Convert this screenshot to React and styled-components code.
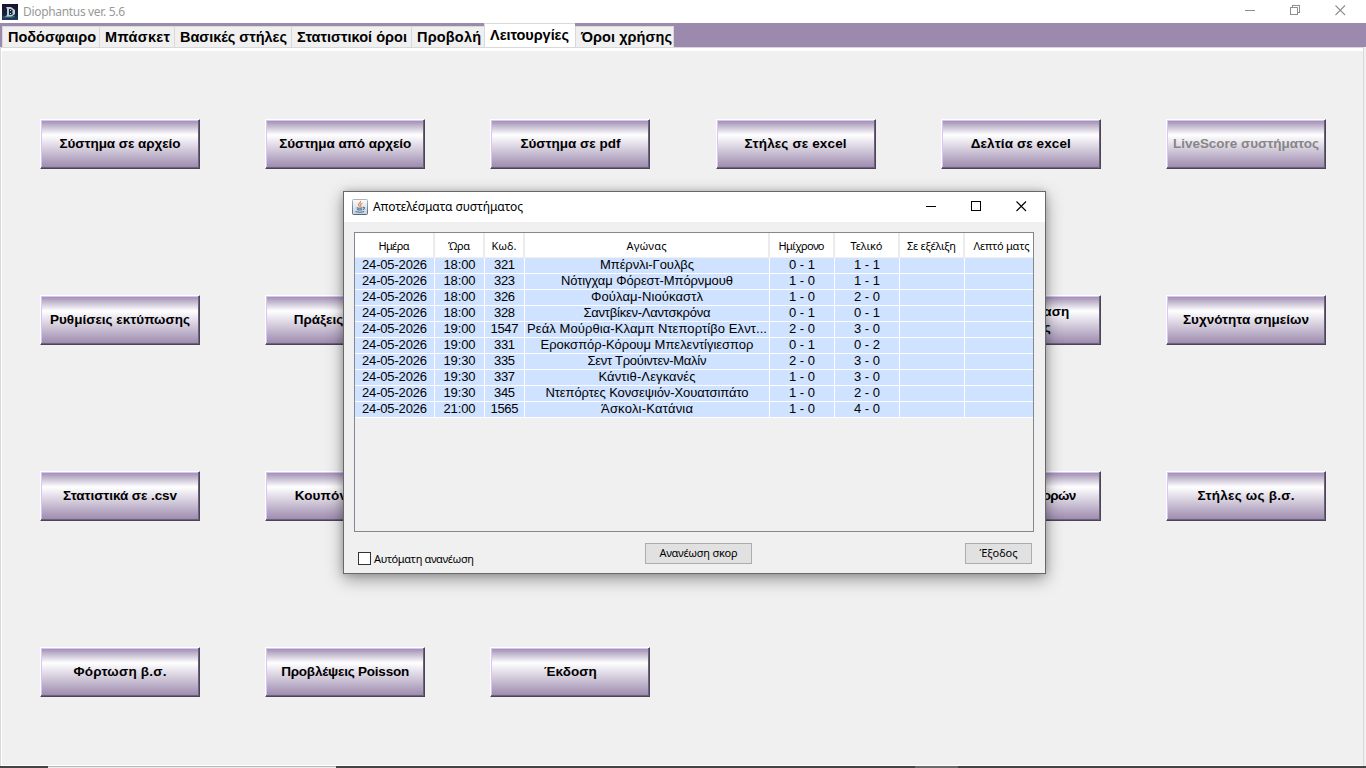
import React, { useLayoutEffect, useRef, useState } from 'react'
import styled, { createGlobalStyle } from 'styled-components'

const GlobalStyle = createGlobalStyle`
* {
  box-sizing: border-box;
}

body {
  margin: 0;
  overflow: hidden;
  background: #f0f0f0;
  font-family: "Liberation Sans", Arial, sans-serif;
}
`

const AppWindow = styled.div`
position: relative;
display: flex;
flex-direction: column;
width: 1366px;
height: 768px;
background: #f0f0f0;
`

const TitleBar = styled.div`
display: flex;
align-items: center;
height: ${p => p.$height}px;
padding-left: ${p => p.$left}px;
background: #fff;
flex-shrink: 0;

> svg {
  flex-shrink: 0;
}
`

const Caption = styled.div`
flex: 1;
padding-left: 5px;
font-family: "Noto Sans", "Open Sans", sans-serif;
font-size: 12px;
line-height: 16px;
color: ${p => p.$color};
`

const WindowButtons = styled.div`
display: flex;
gap: ${p => p.$gap}px;
padding-right: ${p => p.$right}px;
padding-bottom: 2px;
`

const TabBar = styled.div`
display: flex;
align-items: flex-end;
height: 24px;
padding-left: 2px;
background: #9b89ae;
flex-shrink: 0;
`

const Tab = styled.div`
width: ${p => p.$width}px;
height: ${p => p.$active ? 24 : 21}px;
padding: ${p => p.$active ? '3px 0 0 5px' : '2px 0 0 5px'};
border: 1px solid #d9d9d9;
border-right-width: ${p => p.$last ? 1 : 0}px;
border-bottom: 0;
background: ${p => p.$active ? '#fff' : '#f0f0f0'};
font-size: 14.5px;
line-height: 17px;
font-weight: bold;
color: #000;
white-space: nowrap;
`

const Page = styled.div`
flex: 1;
margin-right: 2px;
padding: 68px 37px 0 39px;
border: 1px solid #d9d9d9;
border-bottom: 0;
box-shadow: inset 1px 3px 0 #fff, inset 0 -1px 0 #fff;
`

const ButtonGrid = styled.div`
display: grid;
grid-template-columns: repeat(6, 160px);
grid-auto-rows: 50px;
justify-content: space-between;
row-gap: 126px;
padding-top: 3px;
`

const BevelButton = styled.button`
display: flex;
flex-direction: column;
align-items: center;
justify-content: center;
padding: 0;
border: 1px solid;
border-color: #fff #4d4457 #4d4457 #fff;
box-shadow: inset -1px -1px 0 #6e617c, inset 1px 1px 0 #dbc2f7;
background: linear-gradient(#9b89ae 0%, #fff 31%, #9b89ae 100%);
font-family: inherit;
font-size: 13.5px;
line-height: 16px;
font-weight: bold;
color: ${p => p.disabled ? '#868686' : '#000'};
white-space: nowrap;
`

const BottomEdge = styled.div`
display: flex;
height: 2px;
background: #444;
flex-shrink: 0;
`

const EdgePart = styled.div`
width: ${p => p.$width}px;
margin-left: ${p => p.$left}px;
background: ${p => p.$light ? 'linear-gradient(#b8b8b8 50%, #ececec 50%)' : '#6a6a6a'};
`

const Dialog = styled.div`
position: absolute;
left: 343px;
top: 191px;
width: 703px;
height: 383px;
border: 1px solid #686868;
background: #f0f0f0;
box-shadow: 0 5px 16px rgba(0, 0, 0, 0.38), 0 0 7px rgba(0, 0, 0, 0.16);
`

const TablePane = styled.div`
width: 680px;
height: 300px;
margin: 10px 0 0 10px;
border: 1px solid #828790;
overflow: hidden;
`

const Row = styled.div`
display: grid;
grid-template-columns: 80px 50px 40px 245px 65px 65px 65px 75px;
`

const HeadCell = styled.div`
height: 25px;
border-right: 2px solid #ebebeb;
border-bottom: 1px solid #f0f0f0;
background: #fff;
font-family: "Noto Sans", "Open Sans", sans-serif;
font-size: 11px;
line-height: 26px;
text-align: center;
white-space: nowrap;
`

const Cell = styled.div`
height: 16px;
border-right: 1px solid #fff;
border-bottom: 1px solid #fff;
background: #cfe2ff;
font-size: 13px;
line-height: 13px;
text-align: center;
white-space: nowrap;
overflow: hidden;
`

const DialogFooter = styled.div`
display: flex;
align-items: flex-start;
padding: 11px 13px 0 14px;
font-family: "Noto Sans", "Open Sans", sans-serif;
font-size: 11px;
`

const CheckLabel = styled.div`
display: flex;
align-items: flex-start;
gap: 3px;
width: 287px;
height: 15px;
margin-top: 9px;
line-height: 13px;
`

const CheckBox = styled.div`
width: 13px;
height: 13px;
border: 1px solid #333;
background: #fff;
`

const FlatButton = styled.button`
width: ${p => p.$width}px;
height: 21px;
padding: 0 0 2px;
border: 1px solid #adadad;
background: #e1e1e1;
font: inherit;
line-height: 17px;
color: #000;
`

const Spacer = styled.div`
flex: 1;
`

const FitSpan = styled.span`
display: inline-block;
white-space: pre;
`

// spreads the letters so that the text takes the given width
function Fit({ width, children }) {
  const ref = useRef(null)
  const [spacing, setSpacing] = useState(0)

  useLayoutEffect(() => {
    const natural = ref.current.getBoundingClientRect().width
    setSpacing((width - natural) / (children.length - 1))
  }, [])

  return (
    <FitSpan ref={ref} style={{ letterSpacing: spacing, marginRight: -spacing }}>{children}</FitSpan>
  )
}

const tabs = [
  ['Ποδόσφαιρο', 97, 88],
  ['Μπάσκετ', 75, 65],
  ['Βασικές στήλες', 117, 107],
  ['Στατιστικοί όροι', 120, 110],
  ['Προβολή', 73, 64],
  ['Λειτουργίες', 91, 79],
  ['Όροι χρήσης', 99, 91],
]

const buttons = [
  [['Σύστημα σε αρχείο', 121]],
  [['Σύστημα από αρχείο', 132]],
  [['Σύστημα σε pdf', 100]],
  [['Στήλες σε excel', 102]],
  [['Δελτία σε excel', 100]],
  [['LiveScore συστήματος', 146]],
  [['Ρυθμίσεις εκτύπωσης', 140]],
  [['Πράξεις στηλών', 103]],
  [],
  [],
  [['Αντικατάσταση', 97], ['στήλης', 60]],
  [['Συχνότητα σημείων', 126]],
  [['Στατιστικά σε .csv', 114]],
  [['Κουπόνι σε pdf', 101]],
  [],
  [],
  [['Πίνακας διαφορών', 111]],
  [['Στήλες ως β.σ.', 97]],
  [['Φόρτωση β.σ.', 93]],
  [['Προβλέψεις Poisson', 128]],
  [['Έκδοση', 53]],
]

const columns = [
  ['Ημέρα', 31],
  ['Ώρα', 22],
  ['Κωδ.', 25],
  ['Αγώνας', 40],
  ['Ημίχρονο', 46],
  ['Τελικό', 32],
  ['Σε εξέλιξη', 49],
  ['Λεπτό ματς', 56],
]

const matches = [
  ['18:00', '321', 'Μπέρνλι-Γουλβς', 94, '0 - 1', '1 - 1'],
  ['18:00', '323', 'Νότιγχαμ Φόρεστ-Μπόρνμουθ', 172, '1 - 0', '1 - 1'],
  ['18:00', '326', 'Φούλαμ-Νιούκαστλ', 112, '1 - 0', '2 - 0'],
  ['18:00', '328', 'Σαντβίκεν-Λαντσκρόνα', 127, '0 - 1', '0 - 1'],
  ['19:00', '1547', 'Ρεάλ Μούρθια-Κλαμπ Ντεπορτίβο Ελντ...', 240, '2 - 0', '3 - 0'],
  ['19:00', '331', 'Εροκσπόρ-Κόρουμ Μπελεντίγιεσπορ', 213, '0 - 1', '0 - 2'],
  ['19:30', '335', 'Σεντ Τρούιντεν-Μαλίν', 119, '2 - 0', '3 - 0'],
  ['19:30', '337', 'Κάντιθ-Λεγκανές', 97, '1 - 0', '3 - 0'],
  ['19:30', '345', 'Ντεπόρτες Κονσεψιόν-Χουατσιπάτο', 203, '1 - 0', '2 - 0'],
  ['21:00', '1565', 'Άσκολι-Κατάνια', 92, '1 - 0', '4 - 0'],
]

function AppIcon() {
  return (
    <svg width="16" height="16" viewBox="0 0 16 16">
      <defs>
        <linearGradient id="appBg" x1="0" y1="0" x2="0" y2="1">
          <stop offset="0" stopColor="#1b1029" />
          <stop offset="0.65" stopColor="#10263c" />
          <stop offset="1" stopColor="#20405a" />
        </linearGradient>
      </defs>
      <rect width="16" height="16" fill="url(#appBg)" />
      <path d="M4 3h5l4 3v4l-4 3H3l2-2V5z" fill="#bccdd4" />
      <path d="M7 5h2l2 2-1 1 1 2-2 1H7z" fill="#14243a" />
      <path d="M8 6h1v1H8zM8 9h1v1H8z" fill="#dbe8ea" />
      <path d="M1 13h10l2-1" stroke="#517487" fill="none" />
    </svg>
  )
}

function JavaIcon() {
  return (
    <svg width="16" height="16" viewBox="0 0 16 16">
      <defs>
        <linearGradient id="javaBg" x1="0" y1="0" x2="0" y2="1">
          <stop offset="0" stopColor="#fbfcfc" />
          <stop offset="1" stopColor="#c4d1dc" />
        </linearGradient>
        <linearGradient id="javaEdge" x1="0" y1="0" x2="0" y2="1">
          <stop offset="0" stopColor="#a9b6c1" />
          <stop offset="1" stopColor="#4c6882" />
        </linearGradient>
      </defs>
      <rect x="0.5" y="0.5" width="15" height="15" rx="1" fill="url(#javaBg)" stroke="url(#javaEdge)" />
      <path d="M8.6 2c.6 2-3 2.600-2 4.200.3.600 1 .9 1 1.500M10.300 4.200c-1.800.7-2.600 1.500-1.500 2.500.3.400 0 .9-.4 1.200" fill="none" stroke="#e8853d" strokeWidth="1.100" />
      <path d="M4.500 8.700c1.500.5 4.500.5 6 0M5 10.500c1.500.6 3.700.6 5 0M3.500 12.500c2 1 6.500 1 8.500 0M11 8.500c2-.6 2.200 1.500-.2 2.200" fill="none" stroke="#4e7396" strokeWidth="1.100" />
    </svg>
  )
}

function MinimizeIcon({ color }) {
  return (
    <svg width="11" height="11" shapeRendering="crispEdges">
      <rect x="0" y="5" width="10" height="1" fill={color} />
    </svg>
  )
}

function MaximizeIcon({ color }) {
  return (
    <svg width="11" height="11" shapeRendering="crispEdges">
      <rect x="0.5" y="0.5" width="9" height="9" fill="none" stroke={color} />
    </svg>
  )
}

function RestoreIcon({ color }) {
  return (
    <svg width="11" height="11" shapeRendering="crispEdges">
      <path d="M2.500 2V0.500H9.500V7.500H8M0.500 2.500H7.500V9.500H0.500Z" fill="none" stroke={color} />
    </svg>
  )
}

function CloseIcon({ color }) {
  return (
    <svg width="11" height="11">
      <path d="M0.500 0.500L10 10M10 0.500L0.500 10" fill="none" stroke={color} strokeWidth="1.100" />
    </svg>
  )
}

function ResultsDialog() {
  return (
    <Dialog>
      <TitleBar $height={30} $left={8}>
        <JavaIcon />
        <Caption $color="#000"><Fit width={150}>Αποτελέσματα συστήματος</Fit></Caption>
        <WindowButtons $gap={34} $right={18}>
          <MinimizeIcon color="#000" />
          <MaximizeIcon color="#000" />
          <CloseIcon color="#000" />
        </WindowButtons>
      </TitleBar>
      <TablePane>
        <Row>
          {columns.map(([name, width]) => (
            <HeadCell key={name}><Fit width={width}>{name}</Fit></HeadCell>
          ))}
        </Row>
        {matches.map(([time, code, teams, width, half, full]) => (
          <Row key={code}>
            <Cell><Fit width={65}>24-05-2026</Fit></Cell>
            <Cell><Fit width={32}>{time}</Fit></Cell>
            <Cell><Fit width={code.length * 7}>{code}</Fit></Cell>
            <Cell><Fit width={width}>{teams}</Fit></Cell>
            <Cell><Fit width={26}>{half}</Fit></Cell>
            <Cell><Fit width={26}>{full}</Fit></Cell>
            <Cell />
            <Cell />
          </Row>
        ))}
      </TablePane>
      <DialogFooter>
        <CheckLabel>
          <CheckBox />
          <Fit width={100}>Αυτόματη ανανέωση</Fit>
        </CheckLabel>
        <FlatButton $width={107}><Fit width={78}>Ανανέωση σκορ</Fit></FlatButton>
        <Spacer />
        <FlatButton $width={67}><Fit width={38}>Έξοδος</Fit></FlatButton>
      </DialogFooter>
    </Dialog>
  )
}

export default function App() {
  return (
    <AppWindow>
      <GlobalStyle />
      <TitleBar $height={23} $left={2}>
        <AppIcon />
        <Caption $color="#999"><Fit width={102}>Diophantus ver. 5.6</Fit></Caption>
        <WindowButtons $gap={34} $right={20}>
          <MinimizeIcon color="#8f8f8f" />
          <RestoreIcon color="#8f8f8f" />
          <CloseIcon color="#8f8f8f" />
        </WindowButtons>
      </TitleBar>
      <TabBar>
        {tabs.map(([name, width, textWidth]) => (
          <Tab key={name} $width={width} $active={name === 'Λειτουργίες'} $last={name === 'Όροι χρήσης'}>
            <Fit width={textWidth}>{name}</Fit>
          </Tab>
        ))}
      </TabBar>
      <Page>
        <ButtonGrid>
          {buttons.map((lines, i) => (
            <BevelButton key={i} disabled={i === 5}>
              {lines.map(([text, width]) => <Fit key={text} width={width}>{text}</Fit>)}
            </BevelButton>
          ))}
        </ButtonGrid>
      </Page>
      <BottomEdge>
        <EdgePart $left={48} $width={288} $light />
        <EdgePart $left={579} $width={43} />
      </BottomEdge>
      <ResultsDialog />
    </AppWindow>
  )
}
